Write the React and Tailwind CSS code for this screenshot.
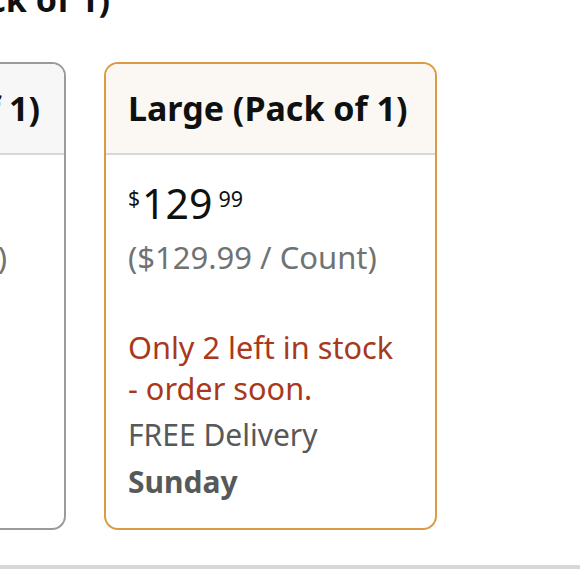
export default function App() {
  return (
    <div className="w-[580px] h-[580px] overflow-hidden bg-white font-['Noto_Sans',sans-serif]">
      <div className="flex justify-end w-[110px] -mt-[19px] h-[36px] text-[34px] font-bold leading-[36px] text-[#0f1111] whitespace-nowrap">
        Size: Large (Pack of 1)
      </div>

      <div className="flex gap-[38px] ml-[-267px] mt-[45px]">
        {/* left card (mostly off-screen) */}
        <div className="w-[333px] h-[468px] shrink-0 rounded-[14px] border-2 border-[#9b9b9b] overflow-hidden flex flex-col">
          <div className="h-[91px] shrink-0 bg-[#f7f7f7] border-b-2 border-[#d5d9d9] flex items-center justify-end pr-[24px] text-[34px] font-bold text-[#0f1111] whitespace-nowrap">
            Medium (Pack of 1)
          </div>
          <div className="flex justify-end pr-[57px] mt-[84px] text-[31px] leading-[36px] text-[#6f7373] whitespace-nowrap">
            ($99.99 / Count)
          </div>
        </div>

        {/* selected card */}
        <div className="w-[333px] h-[468px] shrink-0 rounded-[14px] border-2 border-[#dd9a45] overflow-hidden flex flex-col">
          <div className="h-[91px] shrink-0 bg-[#fbf8f4] border-b-2 border-[#d5d9d9] flex items-center px-[22px] text-[34px] font-bold text-[#0f1111] whitespace-nowrap">
            Large (Pack of 1)
          </div>
          <div className="px-[22px] flex flex-col">
            <div className="flex items-start mt-[28px] text-[#0f1111]">
              <span className="text-[21px] leading-[21px] mt-[5px]">$</span>
              <span className="text-[41px] leading-[41px] ml-[2px]">129</span>
              <span className="text-[21.5px] leading-[21px] mt-[5px] ml-[6px]">99</span>
            </div>
            <div className="mt-[15px] text-[31px] leading-[36px] text-[#6f7373] whitespace-nowrap">
              ($129.99 / Count)
            </div>
            <div className="mt-[52px] text-[30.7px] leading-[41px] text-[#a8391c] whitespace-nowrap">
              <div>Only 2 left in stock</div>
              <div>- order soon.</div>
            </div>
            <div className="mt-[2px] text-[30px] leading-[47px] text-[#565959] whitespace-nowrap">
              <div>FREE Delivery</div>
              <div className="font-bold">Sunday</div>
            </div>
          </div>
        </div>
      </div>

      <div className="mt-[35px] h-[4px] w-full bg-[#d8d8d8]" />
    </div>
  );
}
